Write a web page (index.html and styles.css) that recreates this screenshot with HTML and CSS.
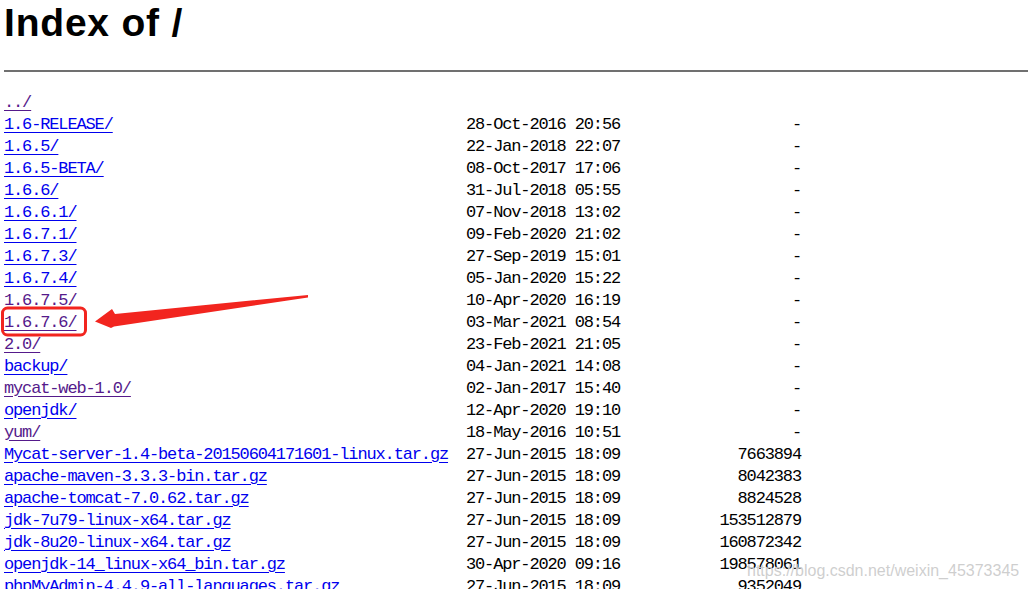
FILE: index.html
```html
<!DOCTYPE html>
<html>
<head>
<meta charset="utf-8">
<title>Index of /</title>
<link rel="stylesheet" href="styles.css">
</head>
<body>
<h1 class="title">Index of /</h1>
<hr class="rule">
<div class="listing">
  <div class="row"><a class="visited" href="#">../</a><span></span><span></span></div>
  <div class="row"><a href="#">1.6-RELEASE/</a><span class="date">28-Oct-2016 20:56</span><span class="size">-</span></div>
  <div class="row"><a href="#">1.6.5/</a><span class="date">22-Jan-2018 22:07</span><span class="size">-</span></div>
  <div class="row"><a href="#">1.6.5-BETA/</a><span class="date">08-Oct-2017 17:06</span><span class="size">-</span></div>
  <div class="row"><a href="#">1.6.6/</a><span class="date">31-Jul-2018 05:55</span><span class="size">-</span></div>
  <div class="row"><a href="#">1.6.6.1/</a><span class="date">07-Nov-2018 13:02</span><span class="size">-</span></div>
  <div class="row"><a href="#">1.6.7.1/</a><span class="date">09-Feb-2020 21:02</span><span class="size">-</span></div>
  <div class="row"><a href="#">1.6.7.3/</a><span class="date">27-Sep-2019 15:01</span><span class="size">-</span></div>
  <div class="row"><a href="#">1.6.7.4/</a><span class="date">05-Jan-2020 15:22</span><span class="size">-</span></div>
  <div class="row"><a class="visited" href="#">1.6.7.5/</a><span class="date">10-Apr-2020 16:19</span><span class="size">-</span></div>
  <div class="row"><a class="visited" href="#">1.6.7.6/</a><span class="date">03-Mar-2021 08:54</span><span class="size">-</span></div>
  <div class="row"><a class="visited" href="#">2.0/</a><span class="date">23-Feb-2021 21:05</span><span class="size">-</span></div>
  <div class="row"><a href="#">backup/</a><span class="date">04-Jan-2021 14:08</span><span class="size">-</span></div>
  <div class="row"><a class="visited" href="#">mycat-web-1.0/</a><span class="date">02-Jan-2017 15:40</span><span class="size">-</span></div>
  <div class="row"><a href="#">openjdk/</a><span class="date">12-Apr-2020 19:10</span><span class="size">-</span></div>
  <div class="row"><a class="visited" href="#">yum/</a><span class="date">18-May-2016 10:51</span><span class="size">-</span></div>
  <div class="row"><a href="#">Mycat-server-1.4-beta-20150604171601-linux.tar.gz</a><span class="date">27-Jun-2015 18:09</span><span class="size">7663894</span></div>
  <div class="row"><a href="#">apache-maven-3.3.3-bin.tar.gz</a><span class="date">27-Jun-2015 18:09</span><span class="size">8042383</span></div>
  <div class="row"><a href="#">apache-tomcat-7.0.62.tar.gz</a><span class="date">27-Jun-2015 18:09</span><span class="size">8824528</span></div>
  <div class="row"><a href="#">jdk-7u79-linux-x64.tar.gz</a><span class="date">27-Jun-2015 18:09</span><span class="size">153512879</span></div>
  <div class="row"><a href="#">jdk-8u20-linux-x64.tar.gz</a><span class="date">27-Jun-2015 18:09</span><span class="size">160872342</span></div>
  <div class="row"><a href="#">openjdk-14_linux-x64_bin.tar.gz</a><span class="date">30-Apr-2020 09:16</span><span class="size">198578061</span></div>
  <div class="row"><a href="#">phpMyAdmin-4.4.9-all-languages.tar.gz</a><span class="date">27-Jun-2015 18:09</span><span class="size">9352049</span></div>
</div>
<svg class="annotation" width="1028" height="589" viewBox="0 0 1028 589">
  <rect x="2.5" y="308" width="83" height="27" rx="5" ry="5" fill="none" stroke="#f2251f" stroke-width="3"/>
  <polygon points="95,321.5 112,309 115,314 308,295 308,297.5 114,326.5 111,328" fill="#f2251f"/>
</svg>
<div class="watermark">https://blog.csdn.net/weixin_45373345</div>
</body>
</html>
```
FILE: styles.css
```css
html, body {
  margin: 0;
  padding: 0;
  background: #ffffff;
  overflow: hidden;
}
body {
  padding-left: 4px;
  position: relative;
  min-height: 589px;
}
.title {
  margin: 1px 0 0 0;
  font-family: "Liberation Sans", Arial, sans-serif;
  font-weight: bold;
  font-size: 39px;
  letter-spacing: 0.8px;
  line-height: 44px;
  color: #000;
}
.rule {
  margin: 25px 0 0 0;
  border: none;
  border-top: 2px solid #707070;
  height: 0;
}
.listing {
  margin-top: 20px;
  font-family: "Liberation Mono", "Courier New", monospace;
  font-size: 17px;
  letter-spacing: -1.14px;
  line-height: 22px;
  color: #000;
}
.row {
  display: grid;
  grid-template-columns: 462px 154px 181px;
  height: 22px;
  white-space: pre;
}
.row a {
  color: #0000ee;
  text-decoration: underline;
  text-underline-offset: 3px;
  justify-self: start;
}
.row a.visited {
  color: #551a8b;
}
.size {
  text-align: right;
}
.annotation {
  position: absolute;
  left: 0;
  top: 0;
  pointer-events: none;
}
.watermark {
  position: absolute;
  left: 747px;
  top: 561px;
  font-family: "Liberation Sans", Arial, sans-serif;
  font-size: 16px;
  line-height: 20px;
  color: rgba(190, 190, 190, 0.75);
  text-shadow: 0 0 1px #fff;
  white-space: nowrap;
}
```
